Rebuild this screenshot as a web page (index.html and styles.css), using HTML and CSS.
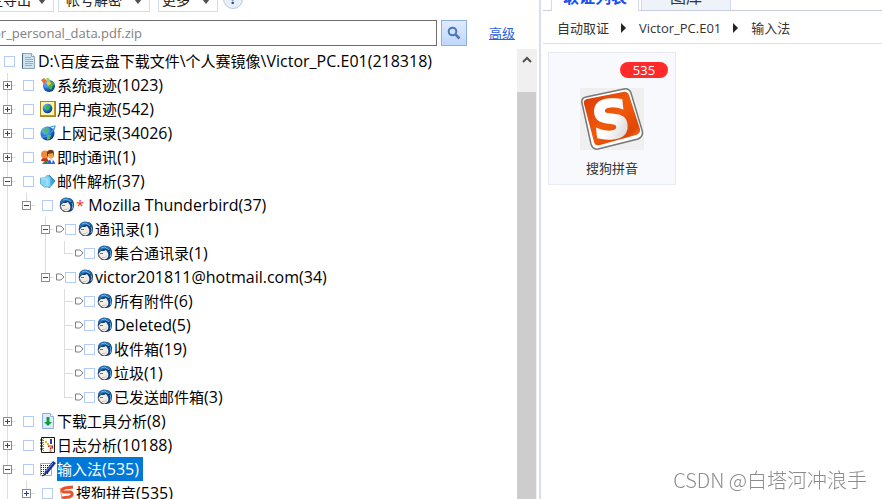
FILE: index.html
```html
<!DOCTYPE html>
<html lang="zh-CN">
<head>
    <meta charset="UTF-8">
    <meta name="viewport" content="width=device-width, initial-scale=1.0">
    <title>自动取证</title>
    <link rel="stylesheet" href="styles.css">
</head>
<body>
    <!-- Shared icons -->
    <svg class="sprite" aria-hidden="true">
        <defs>
            <radialGradient id="globe" cx="0.35" cy="0.3" r="0.8">
                <stop offset="0" stop-color="#8fd8ff"/>
                <stop offset="0.5" stop-color="#1f74d0"/>
                <stop offset="1" stop-color="#0a2a78"/>
            </radialGradient>
            <linearGradient id="orange" x1="0" y1="0" x2="1" y2="1">
                <stop offset="0" stop-color="#d83a08"/>
                <stop offset="0.5" stop-color="#f05a0c"/>
                <stop offset="0.8" stop-color="#e04606"/>
                <stop offset="1" stop-color="#ff9a4c"/>
            </linearGradient>
            <linearGradient id="silver" x1="0" y1="0" x2="1" y2="1">
                <stop offset="0.5" stop-color="#ffffff"/>
                <stop offset="1" stop-color="#c4c4c4"/>
            </linearGradient>
        </defs>
        <symbol id="plus" viewBox="0 0 9 9">
            <rect x="0.5" y="0.5" width="8" height="8" fill="#fff" stroke="#8c8c8c"/>
            <path d="M2 4.5h5M4.5 2v5" stroke="#2c4390"/>
        </symbol>
        <symbol id="minus" viewBox="0 0 9 9">
            <rect x="0.5" y="0.5" width="8" height="8" fill="#fff" stroke="#8c8c8c"/>
            <path d="M2 4.5h5" stroke="#2c4390"/>
        </symbol>
        <symbol id="tag" viewBox="0 0 9 8">
            <path d="M0.5 1h4.5l3 3-3 3h-4.5z" fill="#fff" stroke="#808080"/>
        </symbol>
        <symbol id="doc" viewBox="0 0 16 16">
            <path d="M1.5 0.5h9l3 3v12h-12z" fill="#cfe3ef" stroke="#8ea8ba"/>
            <path d="M1.5 0.5v15" stroke="#47687f"/>
            <path d="M10.5 0.5v3h3" fill="#fff" stroke="#8ea8ba"/>
            <path d="M4 4.5h6M4 6.5h8M4 8.5h8M4 10.5h8M4 12.5h7" stroke="#93b3c9"/>
        </symbol>
        <symbol id="system" viewBox="0 0 16 16">
            <circle cx="9" cy="9" r="6" fill="url(#globe)"/>
            <path d="M9 6c3-2 5-1 5 1s-2 2-2 4-2 2-3 0-1-3 0-5z" fill="#45b542"/>
            <path d="M1 3l3-2 3 3-3 3z" fill="#ee6a2f"/>
            <path d="M6 1l3 0 1 3-3 1z" fill="#9ad36f"/>
            <path d="M3 7l3-1 2 3-3 2z" fill="#5a93e8"/>
            <path d="M7 5l3-1 1 3-3 2z" fill="#f4cb37"/>
        </symbol>
        <symbol id="user" viewBox="0 0 16 16">
            <rect x="0.5" y="0.5" width="15" height="15" fill="#fff5a9" stroke="#a3862b"/>
            <path d="M14 1v13H1v1h14V1z" fill="#b6982e"/>
            <circle cx="7.5" cy="7.5" r="4.8" fill="url(#globe)"/>
            <path d="M5 5c2-2 6-1 5 1s-2 4-4 3z" fill="#38b44a"/>
        </symbol>
        <symbol id="web" viewBox="0 0 16 16">
            <circle cx="7.5" cy="8.5" r="7" fill="url(#globe)"/>
            <path d="M3 5l3-2 3 1-1 3-3 1zM7 9l4 1-1 4-3 1z" fill="#4fb95a"/>
            <path d="M1 12C6 13 12 8 15 2M10 2l5-1-1 4" fill="none" stroke="#439ce0" stroke-width="1.2"/>
        </symbol>
        <symbol id="chat" viewBox="0 0 16 16">
            <path d="M1 12c0-3 3-4 6-3l2 4z" fill="#c42a26"/>
            <circle cx="5" cy="5.5" r="4" fill="#f08a35"/>
            <path d="M7 3c2-3 7-3 7 1l0 4-7-1z" fill="#713914"/>
            <path d="M8 5l5-1 1 4-3 2-3-2z" fill="#f0a052"/>
            <path d="M2 15l4-4 2 4z" fill="#278b3c"/>
            <path d="M7 15c0-6 8-6 8 0z" fill="#345fdd"/>
            <path d="M10 10.5h3l-1 4z" fill="#fff"/>
        </symbol>
        <symbol id="mail" viewBox="0 0 16 16">
            <path d="M9 2l6 6-6 7z" fill="#35a5df" stroke="#2d8bc3"/>
            <path d="M0.5 5h4l3-3 3 3v9h-6l-4-3z" fill="#86d3f3" stroke="#5ab5de"/>
            <path d="M1 6h6v7" fill="none" stroke="#b9e8fb"/>
        </symbol>
        <symbol id="bird" viewBox="0 0 16 16">
            <path d="M1 7C1 2 5 0 9 1c4 0 6 3 6 7s-2 7-6 7H5C2 13 0 10 1 7z" fill="#153b73"/>
            <path d="M1 7C1 3 5 0 9 1c4 0 5 4 5 6-1-2-2-3-4-3L7 4 3 6z" fill="#2470b0"/>
            <path d="M2 8l2-2 3 0 2-1 2 3c1 3 0 5-2 6-2 1-4 0-5-1-2-2-3-3-2-5z" fill="#f3eee5"/>
            <path d="M4 3l4-1 4 3M13 6l1 3-1 3" fill="none" stroke="#62b7e8"/>
            <path d="M3 8.5h3M2 10v2l2 2" fill="none" stroke="#6d727c"/>
            <path d="M5 12.5h3l2-2" stroke="#cfc2ac" fill="none"/>
        </symbol>
        <symbol id="download" viewBox="0 0 16 16">
            <path d="M2.5 0.5h8l3 3v12h-11z" fill="#dbeaff" stroke="#8daee0"/>
            <path d="M10.5 0.5v3h3" fill="#fff" stroke="#8daee0"/>
            <path d="M6.5 4h3v5h2.5L8 13 4 9h2.5z" fill="#159b38"/>
        </symbol>
        <symbol id="log" viewBox="0 0 16 16">
            <path d="M1.5 0.5h13v15h-13z" fill="#fffef0" stroke="#16160f"/>
            <path d="M3.5 1v14" stroke="#777" stroke-dasharray="1 1"/>
            <path d="M0 3h3M0 6h3M0 9h3M0 12h3" stroke="#16160f"/>
            <path d="M5 4h2v2H5zM7 6h2v2H7z" fill="#efb51b"/>
            <path d="M11 2v5" stroke="#293fcb" stroke-width="2"/>
            <path d="M8.5 10V9h4v2h-2v1.5M9.5 14h2" fill="none" stroke="#a82020" stroke-width="1.2"/>
        </symbol>
        <symbol id="pen" viewBox="0 0 16 16">
            <path d="M0.5 2.5h11v12h-11z" fill="#fff" stroke="#aaa"/>
            <path d="M1 4.5h9M1 6.5h9M1 8.5h8M1 10.5h7M1 12.5h8" stroke="#292929" stroke-dasharray="1 1"/>
            <path d="M13 0l3 2-8 10-4 2 1-4z" fill="#1c2f90"/>
            <path d="M13 2l-7 8" stroke="#8195f0"/>
            <path d="M2 15l4-2" stroke="#111"/>
        </symbol>
        <symbol id="sogou-small" viewBox="0 0 16 16">
            <path d="M14 2L6 3C2 4 2 7 6 7h5c3 0 3 4-1 5l-7 1" fill="none" stroke="#e6522a" stroke-width="3"/>
            <path d="M1 3l2 11 9 1" fill="none" stroke="#ee8a68"/>
        </symbol>
    </svg>

    <div class="app">
        <section class="left">
            <div class="toolbar">
                <button class="menu-btn export">自定导出<span class="caret"></span></button>
                <button class="menu-btn decrypt">帐号解密<span class="caret"></span></button>
                <button class="menu-btn more">更多<span class="caret"></span></button>
                <button class="help">?</button>
            </div>
            <form class="search">
                <input class="search-box" type="text" aria-label="搜索" placeholder="or_personal_data.pdf.zip">
                <button class="search-btn" type="button" aria-label="搜索">
                    <svg width="14" height="14" viewBox="0 0 14 14"><circle cx="5.5" cy="5.5" r="3.8" fill="none" stroke="#4e78b5" stroke-width="2"/><path d="M8.5 8.5l4 4" stroke="#4e78b5" stroke-width="2.5"/></svg>
                </button>
                <a class="advanced" href="#">高级</a>
            </form>
            <div class="tree-wrap">
                <div class="tree">
                    <div class="row root">
                        <label><input type="checkbox"><svg class="icon"><use href="#doc"/></svg><span class="name"><span class="latin">D:\</span>百度云盘下载文件<span class="latin">\</span>个人赛镜像<span class="latin">\Victor_PC.E01(218318)</span></span></label>
                    </div>
                    <ul>
                        <li>
                            <div class="row"><button class="toggle" aria-label="展开"><svg><use href="#plus"/></svg></button><label><input type="checkbox"><svg class="icon"><use href="#system"/></svg><span class="name">系统痕迹<span class="latin">(1023)</span></span></label></div>
                        </li>
                        <li>
                            <div class="row"><button class="toggle" aria-label="展开"><svg><use href="#plus"/></svg></button><label><input type="checkbox"><svg class="icon"><use href="#user"/></svg><span class="name">用户痕迹<span class="latin">(542)</span></span></label></div>
                        </li>
                        <li>
                            <div class="row"><button class="toggle" aria-label="展开"><svg><use href="#plus"/></svg></button><label><input type="checkbox"><svg class="icon"><use href="#web"/></svg><span class="name">上网记录<span class="latin">(34026)</span></span></label></div>
                        </li>
                        <li>
                            <div class="row"><button class="toggle" aria-label="展开"><svg><use href="#plus"/></svg></button><label><input type="checkbox"><svg class="icon"><use href="#chat"/></svg><span class="name">即时通讯<span class="latin">(1)</span></span></label></div>
                        </li>
                        <li>
                            <div class="row"><button class="toggle" aria-label="收起"><svg><use href="#minus"/></svg></button><label><input type="checkbox"><svg class="icon"><use href="#mail"/></svg><span class="name">邮件解析<span class="latin">(37)</span></span></label></div>
                            <ul>
                                <li>
                                    <div class="row"><button class="toggle" aria-label="收起"><svg><use href="#minus"/></svg></button><label><input type="checkbox"><svg class="icon"><use href="#bird"/></svg><span class="name"><span class="star">*</span> <span class="latin">Mozilla Thunderbird(37)</span></span></label></div>
                                    <ul>
                                        <li>
                                            <div class="row"><button class="toggle" aria-label="收起"><svg><use href="#minus"/></svg></button><label class="tagged"><svg class="tag"><use href="#tag"/></svg><input type="checkbox"><svg class="icon"><use href="#bird"/></svg><span class="name">通讯录<span class="latin">(1)</span></span></label></div>
                                            <ul>
                                                <li><div class="row leaf"><label class="tagged"><svg class="tag"><use href="#tag"/></svg><input type="checkbox"><svg class="icon"><use href="#bird"/></svg><span class="name">集合通讯录<span class="latin">(1)</span></span></label></div></li>
                                            </ul>
                                        </li>
                                        <li>
                                            <div class="row"><button class="toggle" aria-label="收起"><svg><use href="#minus"/></svg></button><label class="tagged"><svg class="tag"><use href="#tag"/></svg><input type="checkbox"><svg class="icon"><use href="#bird"/></svg><span class="name"><span class="latin">victor201811@hotmail.com(34)</span></span></label></div>
                                            <ul>
                                                <li><div class="row leaf"><label class="tagged"><svg class="tag"><use href="#tag"/></svg><input type="checkbox"><svg class="icon"><use href="#bird"/></svg><span class="name">所有附件<span class="latin">(6)</span></span></label></div></li>
                                                <li><div class="row leaf"><label class="tagged"><svg class="tag"><use href="#tag"/></svg><input type="checkbox"><svg class="icon"><use href="#bird"/></svg><span class="name"><span class="latin">Deleted(5)</span></span></label></div></li>
                                                <li><div class="row leaf"><label class="tagged"><svg class="tag"><use href="#tag"/></svg><input type="checkbox"><svg class="icon"><use href="#bird"/></svg><span class="name">收件箱<span class="latin">(19)</span></span></label></div></li>
                                                <li><div class="row leaf"><label class="tagged"><svg class="tag"><use href="#tag"/></svg><input type="checkbox"><svg class="icon"><use href="#bird"/></svg><span class="name">垃圾<span class="latin">(1)</span></span></label></div></li>
                                                <li><div class="row leaf"><label class="tagged"><svg class="tag"><use href="#tag"/></svg><input type="checkbox"><svg class="icon"><use href="#bird"/></svg><span class="name">已发送邮件箱<span class="latin">(3)</span></span></label></div></li>
                                            </ul>
                                        </li>
                                    </ul>
                                </li>
                            </ul>
                        </li>
                        <li>
                            <div class="row"><button class="toggle" aria-label="展开"><svg><use href="#plus"/></svg></button><label><input type="checkbox"><svg class="icon"><use href="#download"/></svg><span class="name">下载工具分析<span class="latin">(8)</span></span></label></div>
                        </li>
                        <li>
                            <div class="row"><button class="toggle" aria-label="展开"><svg><use href="#plus"/></svg></button><label><input type="checkbox"><svg class="icon"><use href="#log"/></svg><span class="name">日志分析<span class="latin">(10188)</span></span></label></div>
                        </li>
                        <li class="open">
                            <div class="row"><button class="toggle" aria-label="收起"><svg><use href="#minus"/></svg></button><label><input type="checkbox"><svg class="icon"><use href="#pen"/></svg><span class="name selected">输入法<span class="latin">(535)</span></span></label></div>
                            <ul>
                                <li>
                                    <div class="row"><button class="toggle" aria-label="展开"><svg><use href="#plus"/></svg></button><label><input type="checkbox"><svg class="icon"><use href="#sogou-small"/></svg><span class="name">搜狗拼音<span class="latin">(535)</span></span></label></div>
                                </li>
                            </ul>
                        </li>
                    </ul>
                </div>
                <div class="scrollbar">
                    <svg class="scroll-up" width="10" height="7" viewBox="0 0 10 7"><path d="M1 6l4-4 4 4" fill="none" stroke="#505050" stroke-width="2"/></svg>
                    <div class="thumb"></div>
                </div>
            </div>
        </section>

        <main class="right">
            <div class="tabs">
                <button class="tab active">取证列表</button>
                <button class="tab">图库</button>
            </div>
            <nav class="crumbs">
                <a href="#">自动取证</a><span class="arrow"></span><a href="#">Victor_PC.E01</a><span class="arrow"></span><a href="#">输入法</a>
            </nav>
            <div class="cards">
                <div class="card">
                    <span class="badge">535</span>
                    <svg class="logo" width="64" height="62" viewBox="0 0 64 62">
                        <rect width="64" height="62" fill="#efefef"/>
                        <path d="M6 9L44 1q5-1 7 4l11 37q2 6-4 9L18 61q-5 1-7-5L2 15q-1-5 4-6z" fill="#fff" stroke="#777" stroke-width="1.5"/>
                        <path d="M7 11L43 4q4-1 6 3l11 34q1 4-4 6L20 57q-5 1-6-3L4 16q-1-4 3-5z" fill="url(#orange)"/>
                        <text class="logo-mark" x="31" y="50" text-anchor="middle" transform="rotate(-6 31 31)" fill="url(#silver)" stroke="url(#silver)" stroke-width="2">S</text>
                    </svg>
                    <span class="card-name">搜狗拼音</span>
                </div>
            </div>
        </main>
    </div>
    <div class="watermark">CSDN @白塔河冲浪手</div>
</body>
</html>
```
FILE: styles.css
```css
* {
    box-sizing: border-box;
}
body {
    margin: 0;
    height: 100vh;
    overflow: hidden;
    background-color: white;
    color: #000;
    font-family: "Open Sans", "Noto Sans CJK SC", sans-serif;
    font-size: 15px;
}
button, input {
    font-family: inherit;
    margin: 0;
    padding: 0;
}
ul {
    list-style: none;
    margin: 0;
    padding: 0;
}
.sprite {
    position: absolute;
    width: 0;
    height: 0;
}
.app {
    display: flex;
    height: 100%;
}
.left {
    flex: 0 0 calc(61% + 1px);
    display: flex;
    flex-direction: column;
    min-width: 0;
    overflow: hidden;
}

/* the toolbar is scrolled half out of view */
.toolbar {
    display: flex;
    flex: none;
    margin: -14px 0 0 -45px;
    height: 26px;
}
.menu-btn {
    display: flex;
    align-items: center;
    justify-content: flex-end;
    gap: 12px;
    height: 26px;
    padding: 0 7px 0 0;
    border: 1px solid #cfdcf0;
    background: #fff;
    color: #222;
    font-size: 14px;
    white-space: nowrap;
}
.export {
    width: 99px;
    margin-right: 4px;
    gap: 7px;
}
.decrypt {
    width: 92px;
    margin-right: 8px;
}
.more {
    width: 60px;
    margin-right: 5px;
}
.caret {
    margin-top: 4px;
    border: 4px solid transparent;
    border-top: 5px solid #505050;
    border-bottom: 0;
}
.help {
    width: 20px;
    height: 20px;
    margin-top: 3px;
    border: 1px solid #b9c9dd;
    border-radius: 50%;
    background: #e8eff8;
    color: #23468c;
    font-size: 14px;
    font-weight: bold;
    line-height: 18px;
}

.search {
    display: flex;
    align-items: center;
    flex: none;
    margin: 7px 0 4px -10px;
}
.search-box {
    width: 447px;
    height: 26px;
    margin-top: 1px;
    padding: 0 2px;
    border: 1px solid #6e6e6e;
    font-size: 13px;
}
.search-box::placeholder {
    color: #808080;
}
.search-btn {
    display: flex;
    align-items: center;
    justify-content: center;
    width: 26px;
    height: 26px;
    margin: 0 22px 0 4px;
    border: 1px solid #8fb0dc;
    background: linear-gradient(#dfeaff, #bfd8fc);
}
.advanced {
    color: #2c62dc;
    font-size: 13px;
}

.tree-wrap {
    display: flex;
    flex: 1;
    min-height: 0;
    margin-top: -1px;
    padding-right: 2px;
}
.tree {
    flex: 1;
    overflow: hidden;
}
/* guide lines: one down the left, one across to the row */
.tree li {
    background:
        linear-gradient(#dcdcdc, #dcdcdc) 7px 0 / 1px 100% no-repeat,
        linear-gradient(#dcdcdc, #dcdcdc) 7px 12px / 9px 1px no-repeat;
}
.tree li:last-child:not(.open) {
    background-size: 1px 12px, 9px 1px;
}
.tree li ul {
    padding-left: 19px;
}
.row {
    display: flex;
    align-items: center;
    height: 24px;
    padding-left: 3px;
    white-space: nowrap;
}
.row label {
    display: flex;
    align-items: center;
    padding-left: 11px;
}
.row .tagged {
    padding-left: 6px;
}
.leaf {
    padding-left: 12px;
}
.root label {
    padding-left: 1px;
}
.toggle {
    display: flex;
    width: 9px;
    height: 9px;
    border: 0;
    background: none;
}
.toggle svg {
    width: 9px;
    height: 9px;
}
.tag {
    width: 9px;
    height: 8px;
}
.row input {
    appearance: none;
    width: 11px;
    height: 11px;
    border: 1px solid #b5cbf7;
    background: #fff;
}
.icon {
    width: 16px;
    height: 16px;
    margin: 0 1px 0 6px;
}
.tagged .icon {
    margin-left: 2px;
}
.name {
    height: 24px;
    line-height: 24px;
}
.latin {
    font-size: 16px;
}
.star {
    color: #f03030;
}
.selected {
    padding-right: 4px;
    background-color: #0078d7;
    color: white;
}

.scrollbar {
    display: flex;
    flex-direction: column;
    width: 20px;
    background-color: #f0f0f0;
}
.scroll-up {
    flex: none;
    margin: 7px 5px 29px;
}
.thumb {
    flex: 1;
    margin-right: 1px;
    background-color: #cdcdcd;
}

.right {
    flex: 1;
    min-width: 0;
    padding-left: 2px;
    border-left: 2px solid #d4dff2;
}
.tabs {
    display: flex;
    gap: 2px;
    height: 11px;
    padding-left: 8px;
    align-items: flex-end;
    border-bottom: 1px solid #c9cde0;
}
.tab {
    width: 90px;
    height: 30px;
    border: 1px solid #d0daec;
    border-bottom: 0;
    background: #eef2f9;
    color: #333;
    font-size: 16px;
}
.tab.active {
    width: 88px;
    height: 31px;
    margin-bottom: -1px;
    background: #fff;
    color: #1a50f0;
    font-weight: bold;
}
.crumbs {
    display: flex;
    align-items: center;
    height: 33px;
    padding: 1px 0 0 14px;
    border-bottom: 1px solid #d6e0ee;
    font-size: 13px;
}
.crumbs a {
    color: #333;
    text-decoration: none;
}
.arrow {
    margin: 0 13px 0 12px;
    border: 5px solid transparent;
    border-left-color: #222;
    border-right: 0;
}
.cards {
    display: flex;
    flex-wrap: wrap;
    padding: 8px 5px;
}
.card {
    display: flex;
    flex-direction: column;
    align-items: center;
    width: 128px;
    padding: 9px 7px 6px;
    border: 1px solid #e6ebf3;
    background-color: #f8f9fc;
    font-size: 13px;
}
.badge {
    align-self: flex-end;
    width: 48px;
    margin-bottom: 10px;
    border-radius: 8px;
    background-color: #ff2b2b;
    color: white;
    line-height: 16px;
    text-align: center;
}
.logo-mark {
    font-family: "DejaVu Sans", sans-serif;
    font-size: 52px;
    font-weight: bold;
}
.card-name {
    margin-top: 8px;
    color: #333;
    line-height: 20px;
}
.watermark {
    position: fixed;
    right: 15px;
    bottom: 5px;
    color: #8c8c8c;
    font-family: "Noto Sans CJK SC", sans-serif;
    font-size: 20px;
    font-weight: 300;
    line-height: 28px;
}
```
